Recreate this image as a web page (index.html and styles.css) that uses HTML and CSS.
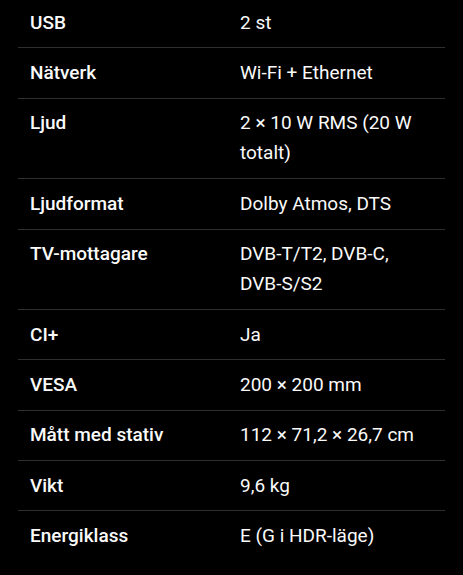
FILE: index.html
```html
<!DOCTYPE html>
<html lang="sv">
<head>
    <meta charset="UTF-8">
    <meta name="viewport" content="width=device-width, initial-scale=1.0">
    <title>Specifikationer</title>
    <link rel="stylesheet" href="styles.css">
</head>
<body>

    <div class="spec-table">
        <div class="spec-row">
            <div class="spec-label">USB</div>
            <div class="spec-value">2 st</div>
        </div>
        <div class="spec-row">
            <div class="spec-label">Nätverk</div>
            <div class="spec-value">Wi-Fi + Ethernet</div>
        </div>
        <div class="spec-row">
            <div class="spec-label">Ljud</div>
            <div class="spec-value">2 × 10 W RMS (20 W totalt)</div>
        </div>
        <div class="spec-row">
            <div class="spec-label">Ljudformat</div>
            <div class="spec-value">Dolby Atmos, DTS</div>
        </div>
        <div class="spec-row">
            <div class="spec-label">TV-mottagare</div>
            <div class="spec-value">DVB-T/T2, DVB-C, <span class="nowrap">DVB-S/S2</span></div>
        </div>
        <div class="spec-row">
            <div class="spec-label">CI+</div>
            <div class="spec-value">Ja</div>
        </div>
        <div class="spec-row">
            <div class="spec-label">VESA</div>
            <div class="spec-value">200 × 200 mm</div>
        </div>
        <div class="spec-row">
            <div class="spec-label">Mått med stativ</div>
            <div class="spec-value">112 × 71,2 × 26,7 cm</div>
        </div>
        <div class="spec-row">
            <div class="spec-label">Vikt</div>
            <div class="spec-value">9,6 kg</div>
        </div>
        <div class="spec-row">
            <div class="spec-label">Energiklass</div>
            <div class="spec-value">E (G i HDR-läge)</div>
        </div>
    </div>

</body>
</html>
```

FILE: styles.css
```css
/* General Styles */
* {
    margin: 0;
    padding: 0;
    box-sizing: border-box;
}

body {
    font-family: 'Roboto', 'Liberation Sans', sans-serif;
    background-color: #000;
    color: #fafafa;
    font-size: 19px;
    line-height: 30px;
}

/* Spec table */
.spec-table {
    margin: -2px 18px 0 18px;
}

.spec-row {
    display: grid;
    grid-template-columns: 210px 1fr;
    padding: 9.7px 0;
    border-bottom: 1px solid #2e2e2e;
}

.spec-row:last-child {
    border-bottom: none;
}

.spec-label,
.spec-value {
    padding: 0 12px;
}

.spec-label {
    font-weight: 500;
}

.nowrap {
    white-space: nowrap;
}
```
